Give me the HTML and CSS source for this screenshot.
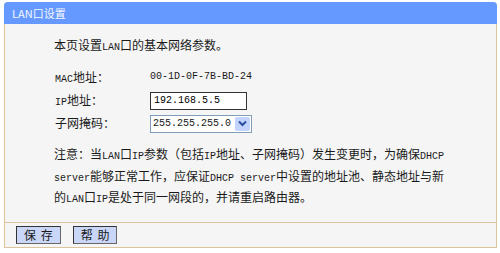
FILE: index.html
```html
<!DOCTYPE html>
<html lang="zh-CN">
<head>
<meta charset="UTF-8">
<title>LAN口设置</title>
<link rel="stylesheet" href="styles.css">
</head>
<body>
<div class="panel">
    <div class="title">LAN口设置</div>
    <div class="content">
        <p class="intro">本页设置<span class="en">LAN</span>口的基本网络参数。</p>
        <div class="form">
            <span class="label"><span class="en">MAC</span>地址：</span>
            <span class="value">00-1D-0F-7B-BD-24</span>
            <span class="label"><span class="en">IP</span>地址：</span>
            <span><input type="text" class="ip" value="192.168.5.5"></span>
            <span class="label">子网掩码：</span>
            <span>
                <span class="select">
                    <span class="select-text">255.255.255.0</span>
                    <span class="select-btn">
                        <svg width="9" height="7" viewBox="0 0 9 7"><path d="M1 1.5 L4.5 5 L8 1.5" fill="none" stroke="#2b4f9e" stroke-width="2"/></svg>
                    </span>
                </span>
            </span>
        </div>
        <p class="note">注意：当<span class="en">LAN</span>口<span class="en">IP</span>参数（包括<span class="en">IP</span>地址、子网掩码）发生变更时，为确保<span class="en">DHCP</span><br><span class="en">server</span>能够正常工作，应保证<span class="en">DHCP server</span>中设置的地址池、静态地址与新<br>的<span class="en">LAN</span>口<span class="en">IP</span>是处于同一网段的，并请重启路由器。</p>
    </div>
    <div class="footer">
        <button class="btn">保 存</button>
        <button class="btn">帮 助</button>
    </div>
</div>
</body>
</html>
```
FILE: styles.css
```css
body {
    margin: 0;
    background: #ffffff;
    font-family: "Noto Sans CJK SC", "DejaVu Sans", sans-serif;
    font-size: 12px;
    color: #1a1a1a;
}
.en {
    font-family: "Liberation Mono", monospace;
    font-size: 10px;
}
.panel {
    margin: 2px 0 0 4px;
    width: 491px;
    border: 1px solid #dcc59c;
    border-top: none;
    border-radius: 4px 4px 0 0;
    background-color: #f5f5f5;
}
.title {
    height: 22px;
    line-height: 22px;
    padding-left: 8px;
    margin: 0 -1px;
    background-color: #6699ff;
    border-radius: 4px 4px 0 0;
    color: #f4f7ff;
    font-size: 11px;
}
.content {
    height: 199px;
    padding-left: 49px;
    border-bottom: 1px solid #dcc59c;
    box-sizing: border-box;
    padding-top: 12px;
}
.intro {
    margin: 0;
    line-height: 18px;
}
.form {
    display: grid;
    grid-template-columns: 96px auto;
    grid-auto-rows: 23px;
    align-items: center;
    margin-top: 8px;
}
.label {
    padding-left: 1px;
}
.value {
    font-family: "Liberation Mono", monospace;
    font-size: 10px;
}
.ip {
    width: 97px;
    height: 18px;
    box-sizing: border-box;
    border: 1px solid #333;
    padding: 0 3px;
    margin: 0;
    font-family: "Liberation Mono", monospace;
    font-size: 10px;
    background: #fff;
}
.select {
    display: inline-flex;
    align-items: center;
    width: 102px;
    height: 18px;
    box-sizing: border-box;
    border: 1px solid #7f9db9;
    background: #fff;
}
.select-text {
    flex: 1;
    padding-left: 2px;
    font-family: "Liberation Mono", monospace;
    font-size: 10px;
}
.select-btn {
    display: flex;
    align-items: center;
    justify-content: center;
    width: 15px;
    height: 14px;
    margin-right: 1px;
    background: #c3d3fd;
    border-radius: 2px;
}
.note {
    margin: 11px 0 0;
    line-height: 18.5px;
}
.footer {
    height: 24px;
    padding-left: 11px;
    display: flex;
    align-items: center;
    gap: 12px;
}
.btn {
    height: 18px;
    padding: 0 7px;
    margin: 0;
    border: 1px solid #333;
    border-right-color: #666;
    border-bottom-color: #666;
    background-color: #c9d6f7;
    font-family: "Noto Sans CJK SC", sans-serif;
    font-size: 12px;
    line-height: 16px;
    word-spacing: 2px;
    color: #1a1a1a;
    cursor: pointer;
}
```
